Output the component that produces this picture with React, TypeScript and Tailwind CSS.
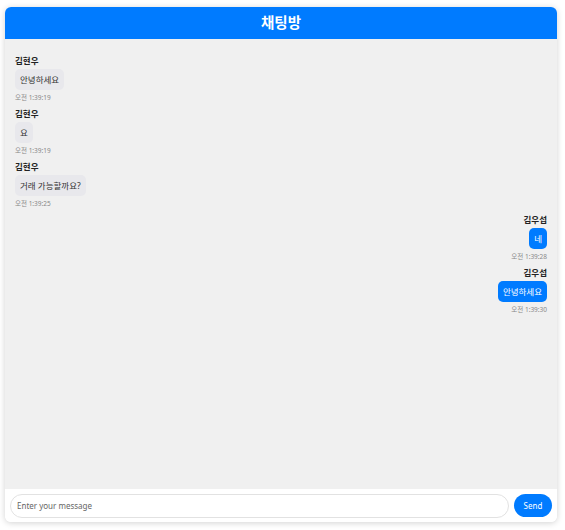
const messages = [
  { id: 1, sender: "김현우", text: "안녕하세요", time: "오전 1:39:19", mine: false },
  { id: 2, sender: "김현우", text: "요", time: "오전 1:39:19", mine: false },
  { id: 3, sender: "김현우", text: "거래 가능할까요?", time: "오전 1:39:25", mine: false },
  { id: 4, sender: "김우섭", text: "네", time: "오전 1:39:28", mine: true },
  { id: 5, sender: "김우섭", text: "안녕하세요", time: "오전 1:39:30", mine: true },
];

const font = "font-['Noto_Sans','Noto_Sans_CJK_KR',sans-serif]";

export default function App() {
  return (
    <main className={`h-[530px] w-[565px] bg-white pl-[5px] pt-[7px] ${font}`}>
      <div className="flex h-[515px] w-[552px] flex-col overflow-hidden rounded-[6px] shadow-[0_1px_6px_rgba(0,0,0,0.18)]">
        <header className="flex h-[32px] shrink-0 items-center justify-center bg-[#007bff]">
          <h1 className="text-[14.5px] font-bold text-white">채팅방</h1>
        </header>

        <div className="flex flex-1 flex-col bg-[#f0f0f0] px-[10px] pt-[16px]">
          {messages.map((m) => (
            <div
              key={m.id}
              className={`mb-[6px] flex flex-col ${m.mine ? "items-end" : "items-start"}`}
            >
              <span className="text-[8.5px] font-bold leading-[11px] text-[#222]">
                {m.sender}
              </span>
              <div
                className={`mt-[3px] rounded-[5px] px-[5px] py-[5px] text-[8.5px] leading-[11px] ${
                  m.mine ? "bg-[#007bff] text-white" : "bg-[#e8e8ec] text-[#333]"
                }`}
              >
                {m.text}
              </div>
              <span className="mt-[3px] text-[6.5px] leading-[9px] text-[#888]">
                {m.time}
              </span>
            </div>
          ))}
        </div>

        <div className="flex h-[33px] shrink-0 items-center gap-[5px] bg-white px-[5px]">
          <input
            type="text"
            placeholder="Enter your message"
            className="h-[24px] flex-1 rounded-full border border-[#e2e2e2] px-[6px] text-[8px] text-[#333] outline-none placeholder:text-[#666]"
          />
          <button
            type="button"
            className="h-[23px] w-[38px] rounded-full bg-[#007bff] text-[8px] text-white"
          >
            Send
          </button>
        </div>
      </div>
    </main>
  );
}
